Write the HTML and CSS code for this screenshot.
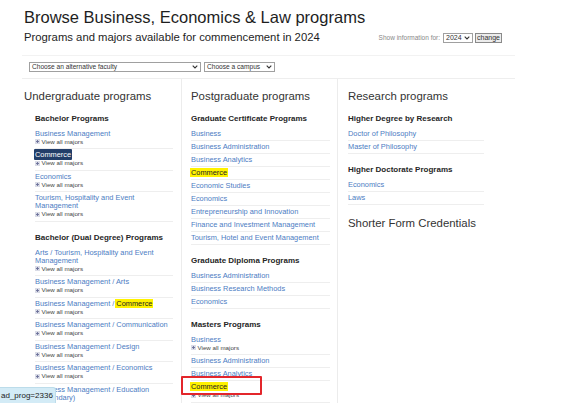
FILE: index.html
```html
<!DOCTYPE html>
<html>
<head>
<meta charset="utf-8">
<link rel="stylesheet" href="styles.css">
</head>
<body>
<div class="page">
  <header class="header">
    <h1 class="title">Browse Business, Economics &amp; Law programs</h1>
    <div class="subrow">
      <p class="subtitle">Programs and majors available for commencement in 2024</p>
      <div class="yearform">
        <span class="yearlabel">Show information for:</span>
        <span class="select sel-year">2024<svg class="chev" width="6" height="4" viewBox="0 0 6 4"><path d="M0.7 0.7 L3 3 L5.3 0.7" fill="none" stroke="#333" stroke-width="1.1"/></svg></span>
        <span class="btn">change</span>
      </div>
    </div>
  </header>

  <div class="filters">
    <span class="select sel-faculty">Choose an alternative faculty<svg class="chev" width="6" height="4" viewBox="0 0 6 4"><path d="M0.7 0.7 L3 3 L5.3 0.7" fill="none" stroke="#333" stroke-width="1.1"/></svg></span>
    <span class="select sel-campus">Choose a campus<svg class="chev" width="6" height="4" viewBox="0 0 6 4"><path d="M0.7 0.7 L3 3 L5.3 0.7" fill="none" stroke="#333" stroke-width="1.1"/></svg></span>
  </div>

  <div class="columns">
    <section class="col col-ug">
      <h2 class="colhead">Undergraduate programs</h2>
      <div class="group">
        <h3 class="grouphead">Bachelor Programs</h3>
        <ul class="list">
          <li class="item has-view"><a class="link">Business Management</a><div class="view"><svg class="plus" width="5" height="5" viewBox="0 0 5 5"><rect x="0" y="0" width="5" height="5" fill="#d9dbe6"/><path d="M2.5 1 V4 M1 2.5 H4" stroke="#6b6f99" stroke-width="0.9"/></svg>View all majors</div></li>
          <li class="item has-view"><a class="link"><span class="selected">Commerce</span></a><div class="view"><svg class="plus" width="5" height="5" viewBox="0 0 5 5"><rect x="0" y="0" width="5" height="5" fill="#d9dbe6"/><path d="M2.5 1 V4 M1 2.5 H4" stroke="#6b6f99" stroke-width="0.9"/></svg>View all majors</div></li>
          <li class="item has-view"><a class="link">Economics</a><div class="view"><svg class="plus" width="5" height="5" viewBox="0 0 5 5"><rect x="0" y="0" width="5" height="5" fill="#d9dbe6"/><path d="M2.5 1 V4 M1 2.5 H4" stroke="#6b6f99" stroke-width="0.9"/></svg>View all majors</div></li>
          <li class="item has-view"><a class="link">Tourism, Hospitality and Event Management</a><div class="view"><svg class="plus" width="5" height="5" viewBox="0 0 5 5"><rect x="0" y="0" width="5" height="5" fill="#d9dbe6"/><path d="M2.5 1 V4 M1 2.5 H4" stroke="#6b6f99" stroke-width="0.9"/></svg>View all majors</div></li>
        </ul>
      </div>
      <div class="group">
        <h3 class="grouphead">Bachelor (Dual Degree) Programs</h3>
        <ul class="list">
          <li class="item has-view"><a class="link">Arts / Tourism, Hospitality and Event Management</a><div class="view"><svg class="plus" width="5" height="5" viewBox="0 0 5 5"><rect x="0" y="0" width="5" height="5" fill="#d9dbe6"/><path d="M2.5 1 V4 M1 2.5 H4" stroke="#6b6f99" stroke-width="0.9"/></svg>View all majors</div></li>
          <li class="item has-view"><a class="link">Business Management / Arts</a><div class="view"><svg class="plus" width="5" height="5" viewBox="0 0 5 5"><rect x="0" y="0" width="5" height="5" fill="#d9dbe6"/><path d="M2.5 1 V4 M1 2.5 H4" stroke="#6b6f99" stroke-width="0.9"/></svg>View all majors</div></li>
          <li class="item has-view"><a class="link">Business Management / <mark class="hl">Commerce</mark></a><div class="view"><svg class="plus" width="5" height="5" viewBox="0 0 5 5"><rect x="0" y="0" width="5" height="5" fill="#d9dbe6"/><path d="M2.5 1 V4 M1 2.5 H4" stroke="#6b6f99" stroke-width="0.9"/></svg>View all majors</div></li>
          <li class="item has-view"><a class="link">Business Management / Communication</a><div class="view"><svg class="plus" width="5" height="5" viewBox="0 0 5 5"><rect x="0" y="0" width="5" height="5" fill="#d9dbe6"/><path d="M2.5 1 V4 M1 2.5 H4" stroke="#6b6f99" stroke-width="0.9"/></svg>View all majors</div></li>
          <li class="item has-view"><a class="link">Business Management / Design</a><div class="view"><svg class="plus" width="5" height="5" viewBox="0 0 5 5"><rect x="0" y="0" width="5" height="5" fill="#d9dbe6"/><path d="M2.5 1 V4 M1 2.5 H4" stroke="#6b6f99" stroke-width="0.9"/></svg>View all majors</div></li>
          <li class="item has-view"><a class="link">Business Management / Economics</a><div class="view"><svg class="plus" width="5" height="5" viewBox="0 0 5 5"><rect x="0" y="0" width="5" height="5" fill="#d9dbe6"/><path d="M2.5 1 V4 M1 2.5 H4" stroke="#6b6f99" stroke-width="0.9"/></svg>View all majors</div></li>
          <li class="item has-view"><a class="link">Business Management / Education (Secondary)</a><div class="view"><svg class="plus" width="5" height="5" viewBox="0 0 5 5"><rect x="0" y="0" width="5" height="5" fill="#d9dbe6"/><path d="M2.5 1 V4 M1 2.5 H4" stroke="#6b6f99" stroke-width="0.9"/></svg>View all majors</div></li>
        </ul>
      </div>
    </section>

    <section class="col col-pg">
      <h2 class="colhead">Postgraduate programs</h2>
      <div class="group">
        <h3 class="grouphead">Graduate Certificate Programs</h3>
        <ul class="list">
          <li class="item"><a class="link">Business</a></li>
          <li class="item"><a class="link">Business Administration</a></li>
          <li class="item"><a class="link">Business Analytics</a></li>
          <li class="item"><a class="link"><mark class="hl">Commerce</mark></a></li>
          <li class="item"><a class="link">Economic Studies</a></li>
          <li class="item"><a class="link">Economics</a></li>
          <li class="item"><a class="link">Entrepreneurship and Innovation</a></li>
          <li class="item"><a class="link">Finance and Investment Management</a></li>
          <li class="item"><a class="link">Tourism, Hotel and Event Management</a></li>
        </ul>
      </div>
      <div class="group">
        <h3 class="grouphead">Graduate Diploma Programs</h3>
        <ul class="list">
          <li class="item"><a class="link">Business Administration</a></li>
          <li class="item"><a class="link">Business Research Methods</a></li>
          <li class="item"><a class="link">Economics</a></li>
        </ul>
      </div>
      <div class="group">
        <h3 class="grouphead">Masters Programs</h3>
        <ul class="list">
          <li class="item has-view"><a class="link">Business</a><div class="view"><svg class="plus" width="5" height="5" viewBox="0 0 5 5"><rect x="0" y="0" width="5" height="5" fill="#d9dbe6"/><path d="M2.5 1 V4 M1 2.5 H4" stroke="#6b6f99" stroke-width="0.9"/></svg>View all majors</div></li>
          <li class="item"><a class="link">Business Administration</a></li>
          <li class="item"><a class="link">Business Analytics</a></li>
          <li class="item has-view marked"><a class="link"><mark class="hl">Commerce</mark></a><div class="view"><svg class="plus" width="5" height="5" viewBox="0 0 5 5"><rect x="0" y="0" width="5" height="5" fill="#d9dbe6"/><path d="M2.5 1 V4 M1 2.5 H4" stroke="#6b6f99" stroke-width="0.9"/></svg>View all majors</div><span class="callout"></span></li>
        </ul>
      </div>
    </section>

    <section class="col col-rs">
      <h2 class="colhead">Research programs</h2>
      <div class="group">
        <h3 class="grouphead">Higher Degree by Research</h3>
        <ul class="list">
          <li class="item"><a class="link">Doctor of Philosophy</a></li>
          <li class="item"><a class="link">Master of Philosophy</a></li>
        </ul>
      </div>
      <div class="group">
        <h3 class="grouphead">Higher Doctorate Programs</h3>
        <ul class="list">
          <li class="item"><a class="link">Economics</a></li>
          <li class="item"><a class="link">Laws</a></li>
        </ul>
      </div>
      <h2 class="colhead">Shorter Form Credentials</h2>
    </section>
  </div>
</div>
<div class="status">ad_prog=2336</div>
</body>
</html>
```

FILE: styles.css
```css
* { box-sizing: border-box; }

html, body {
  margin: 0;
  padding: 0;
  background: #ffffff;
  overflow: hidden;
}

body {
  font-family: "Liberation Sans", Arial, sans-serif;
  color: #333;
}

.page {
  padding: 8px 0 0 22px;
}

.title {
  margin: 0 0 0 2px;
  font-size: 16.5px;
  line-height: 19px;
  font-weight: normal;
  color: #1e1e1e;
}

.subrow {
  display: flex;
  align-items: center;
  justify-content: space-between;
  width: 478px;
  margin: 4px 0 0 2px;
}

.subtitle {
  margin: 0;
  font-size: 11.3px;
  line-height: 13px;
  color: #1e1e1e;
}

.yearform {
  display: flex;
  align-items: center;
  gap: 2px;
  font-size: 6.5px;
  color: #888;
}

.yearlabel {
  margin-right: 1px;
}

.select {
  display: inline-flex;
  align-items: center;
  justify-content: space-between;
  height: 10px;
  padding: 0 2px 0 2px;
  border: 1px solid #a0a0a0;
  background: #fff;
  font-size: 6.6px;
  line-height: 8px;
  color: #333;
}

.chev {
  flex: none;
}

.sel-year {
  width: 30px;
  font-size: 7px;
}

.btn {
  display: inline-block;
  height: 10px;
  padding: 0 1px;
  border: 1px solid #8a8a8a;
  background: #ececec;
  font-size: 7px;
  line-height: 8px;
  color: #333;
}

.filters {
  display: flex;
  gap: 3px;
  width: 493px;
  margin-top: 11px;
  padding: 6px 0 6px 7px;
  border-top: 1px solid #f2f2f2;
  border-bottom: 1px solid #eeeeee;
}

.sel-faculty {
  width: 172px;
}

.sel-campus {
  width: 71px;
  gap: 3px;
}

.columns {
  display: grid;
  grid-template-columns: 160px 156px 150px;
  align-items: stretch;
  min-height: 330px;
}

.col {
  padding-top: 10px;
}

.col-ug {
  padding-left: 2px;
  padding-right: 8px;
  border-right: 1px solid #ececec;
}

.col-pg {
  padding-left: 9px;
  padding-right: 7px;
  border-right: 1px solid #ececec;
}

.col-rs {
  padding-left: 10px;
  padding-right: 4px;
}

.colhead {
  margin: 0 0 11px;
  font-size: 11.4px;
  line-height: 14px;
  font-weight: normal;
  color: #333;
}

.group {
  margin-bottom: 11.5px;
}

.col-ug .group {
  margin-left: 11px;
}

.grouphead {
  margin: 0 0 3.5px;
  font-size: 8px;
  line-height: 10px;
  font-weight: bold;
  color: #262626;
}

.list {
  list-style: none;
  margin: 0;
  padding: 0;
}

.item {
  position: relative;
  padding: 2px 0;
  border-bottom: 1px solid #eeeeee;
}

.item.has-view {
  padding: 2px 0 2.5px;
}

.link {
  display: block;
  font-size: 7.4px;
  line-height: 8px;
  color: #4c7dc3;
  text-decoration: none;
}

.view {
  display: flex;
  align-items: center;
  gap: 1.5px;
  font-size: 6.2px;
  line-height: 8px;
  color: #444;
}

.plus {
  flex: none;
}

.hl {
  background: #fff200;
  color: #222;
  padding: 0 1px;
  margin: 0 -1px;
}

.selected {
  background: #223e69;
  color: #ffffff;
  padding: 1px 1px;
  margin: 0 -1px;
  border-radius: 1px;
}

.callout {
  position: absolute;
  left: -10px;
  top: -5.5px;
  width: 81px;
  height: 19px;
  border: 2px solid #e3262b;
  border-radius: 1px;
}

.status {
  position: fixed;
  left: 0;
  bottom: 0;
  height: 16px;
  padding: 0 2px 0 1px;
  background: #d3ebf6;
  border-top: 1px solid #bcdcea;
  border-right: 1px solid #bcdcea;
  border-top-right-radius: 3px;
  font-size: 8px;
  line-height: 15px;
  color: #222;
}
```
